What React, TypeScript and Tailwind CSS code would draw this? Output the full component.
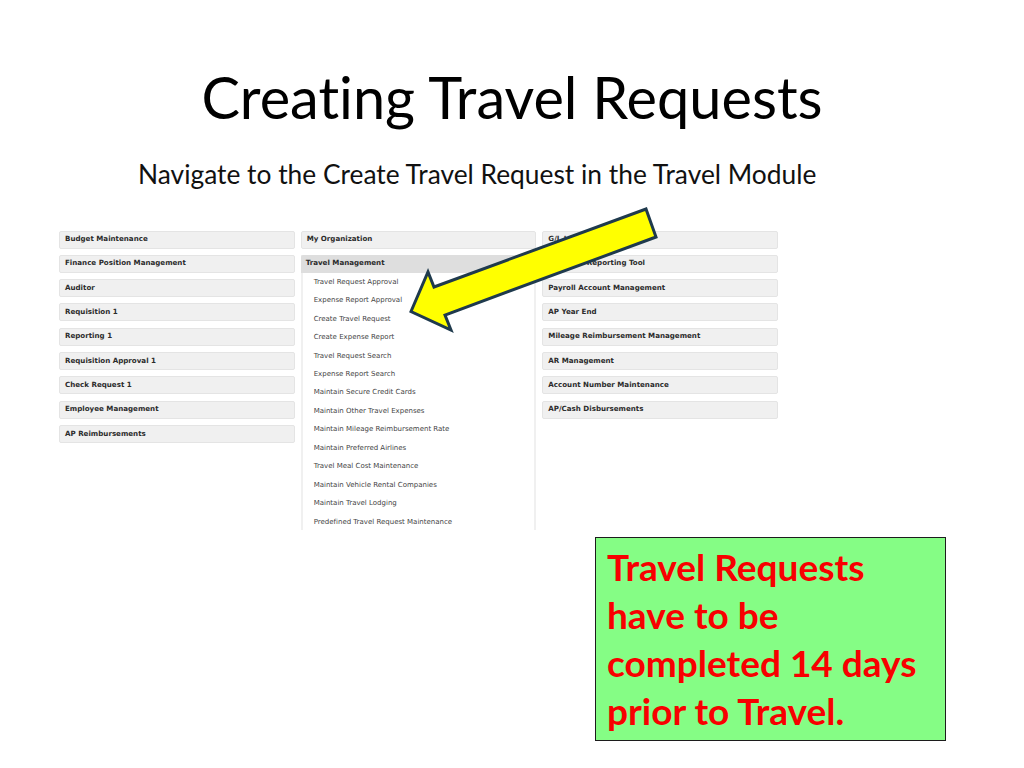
const leftItems = [
  'Budget Maintenance',
  'Finance Position Management',
  'Auditor',
  'Requisition 1',
  'Reporting 1',
  'Requisition Approval 1',
  'Check Request 1',
  'Employee Management',
  'AP Reimbursements',
]

const rightItems = [
  'G/L Inquiry',
  'Financial Reporting Tool',
  'Payroll Account Management',
  'AP Year End',
  'Mileage Reimbursement Management',
  'AR Management',
  'Account Number Maintenance',
  'AP/Cash Disbursements',
]

const travelItems = [
  'Travel Request Approval',
  'Expense Report Approval',
  'Create Travel Request',
  'Create Expense Report',
  'Travel Request Search',
  'Expense Report Search',
  'Maintain Secure Credit Cards',
  'Maintain Other Travel Expenses',
  'Maintain Mileage Reimbursement Rate',
  'Maintain Preferred Airlines',
  'Travel Meal Cost Maintenance',
  'Maintain Vehicle Rental Companies',
  'Maintain Travel Lodging',
  'Predefined Travel Request Maintenance',
]

function MenuButton({ label }: { label: string }) {
  return (
    <div className="h-[18px] shrink-0 flex items-center px-[5px] bg-[#f0f0f0] border border-[#e4e4e4] rounded-[2px] text-[7.1px] font-bold text-[#2b2b2b] whitespace-nowrap overflow-hidden">
      {label}
    </div>
  )
}

export default function App() {
  return (
    <div className="relative w-[1024px] h-[768px] bg-white overflow-hidden font-['Lato',sans-serif] [font-variant-ligatures:none]">
      <h1 className="pt-[62px] text-center text-[57.7px] leading-[70px] font-normal text-black">
        Creating Travel Requests
      </h1>

      <p className="mt-[26px] ml-[138px] text-[26.35px] leading-[32px] text-[#111]">
        Navigate to the Create Travel Request in the Travel Module
      </p>

      <div className="mt-[40.5px] ml-[59px] w-[719px] h-[299.5px] grid grid-cols-3 gap-x-[6px] font-['DejaVu_Sans',sans-serif]">
        <div className="flex flex-col gap-[6.3px]">
          {leftItems.map((item) => (
            <MenuButton key={item} label={item} />
          ))}
        </div>

        <div className="flex flex-col gap-[6.3px] overflow-hidden">
          <MenuButton label="My Organization" />
          <div className="shrink-0 border-x-2 border-[#f0f0f0]">
            <div className="-mx-[2px] h-[18px] flex items-center px-[5px] bg-[#dedede] rounded-t-[2px] text-[7.1px] font-bold text-[#2b2b2b]">
              Travel Management
            </div>
            <div className="pl-[11px] flex flex-col">
              {travelItems.map((item) => (
                <div key={item} className="h-[18.46px] flex items-center text-[7px] text-[#444] whitespace-nowrap">
                  {item}
                </div>
              ))}
            </div>
          </div>
        </div>

        <div className="flex flex-col gap-[6.3px]">
          {rightItems.map((item) => (
            <MenuButton key={item} label={item} />
          ))}
        </div>
      </div>

      <div className="mt-[7px] ml-[595px] w-[351px] h-[204px] bg-[#85fd85] border border-[#1c1c1c] pl-[11px] pt-[5px] text-[37px] leading-[48px] font-bold text-[#f80000]">
        <div>Travel Requests</div>
        <div>have to be</div>
        <div>completed 14 days</div>
        <div>prior to Travel.</div>
      </div>

      <svg className="absolute left-0 top-0" width="1024" height="768" viewBox="0 0 1024 768">
        <polygon
          points="411,311.5 428,272 434,287 646,209 656,237 445,315 451,330"
          fill="#ffff00"
          stroke="#1f3a4d"
          strokeWidth="3"
        />
      </svg>
    </div>
  )
}
